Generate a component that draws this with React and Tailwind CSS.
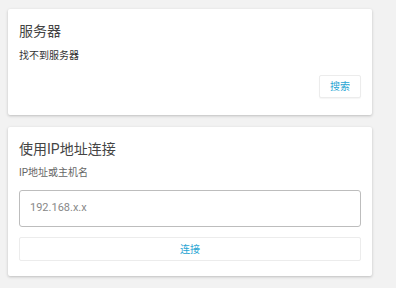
export default function App() {
  return (
    <div
      className="w-[396px] h-[288px] bg-[#f2f2f2] pt-[9px] pl-[8px] overflow-hidden"
      style={{ fontFamily: 'Roboto, "Noto Sans CJK SC", sans-serif' }}
    >
      <div className="w-[364px] flex flex-col gap-[12px]">
        {/* Servers */}
        <div className="bg-white rounded-[2px] shadow-[0_1px_3px_rgba(0,0,0,0.22)] h-[106px] px-[11px] pt-[12px] flex flex-col">
          <div className="text-[14px] leading-[20px] text-[#444]">服务器</div>
          <div className="mt-[8px] text-[10px] leading-[14px] text-[#333]">找不到服务器</div>
          <div className="flex justify-end mt-[12px]">
            <button className="w-[42px] h-[23px] rounded-[2px] border border-[#ececec] bg-white shadow-[0_1px_1px_rgba(0,0,0,0.04)] text-[10px] text-[#2aa5d3]">
              搜索
            </button>
          </div>
        </div>

        {/* Connect by IP */}
        <div className="bg-white rounded-[2px] shadow-[0_1px_3px_rgba(0,0,0,0.22)] h-[149px] px-[11px] pt-[12px] flex flex-col">
          <div className="text-[14px] leading-[20px] text-[#444]">使用IP地址连接</div>
          <div className="mt-[7px] text-[10px] leading-[14px] text-[#666]">IP地址或主机名</div>
          <div className="mt-[10px] h-[37px] rounded-[3px] border border-[#bdbdbd] flex items-center px-[10px] text-[11px] text-[#888]">
            192.168.x.x
          </div>
          <button className="mt-[10px] h-[24px] rounded-[2px] border border-[#ececec] bg-white text-[10px] text-[#2aa5d3]">
            连接
          </button>
        </div>
      </div>
    </div>
  );
}
